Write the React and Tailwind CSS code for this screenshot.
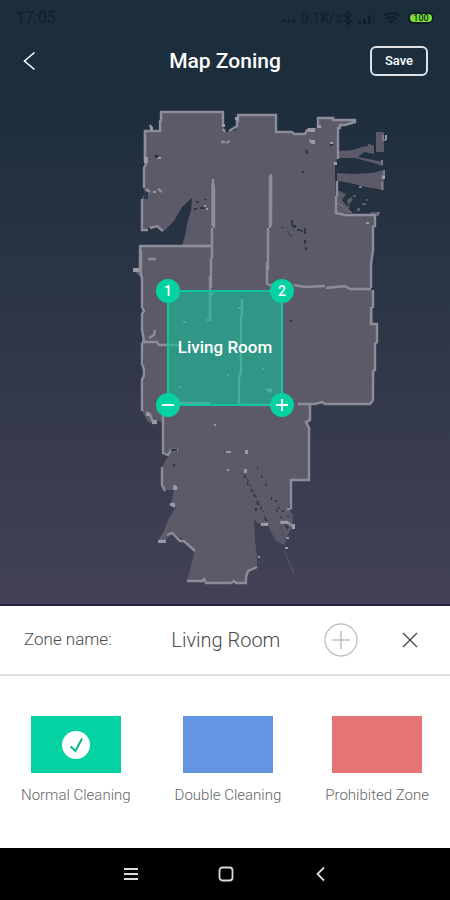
import { useState } from 'react';
import { clsx } from 'clsx';

const ZONE_TYPES = [
  { id: 'normal', label: 'Normal Cleaning', color: 'bg-[#04d2a2]' },
  { id: 'double', label: 'Double Cleaning', color: 'bg-[#6495e2]' },
  { id: 'prohibited', label: 'Prohibited Zone', color: 'bg-[#e57474]' },
];

function StatusBar() {
  return (
    <div className="flex h-9 items-center justify-between px-4 text-[#121f2b]">
      <span className="text-base leading-4">17:05</span>
      <div className="flex items-center gap-1">
        <svg width="16" height="16" viewBox="0 0 16 16" fill="currentColor" aria-hidden="true">
          <circle cx="3" cy="11" r="1.7" />
          <circle cx="8" cy="11" r="1.7" />
          <circle cx="13" cy="11" r="1.7" />
        </svg>
        <span className="-mr-1 text-sm leading-4">0.1K/s</span>
        <svg width="12" height="16" viewBox="0 0 12 16" fill="none" stroke="currentColor" strokeWidth="1.5" aria-hidden="true">
          <path d="M2 4.5l7 7-3.5 3V1.500l3.500 3-7 7" />
        </svg>
        <svg width="18" height="14" viewBox="0 0 18 14" fill="currentColor" aria-hidden="true">
          <path d="M0 10h3v3H0zM5 8h3v5H5zM10 5h2.500v8H10z" />
          <path d="M14.500 2H17v11h-2.500z" opacity="0.35" />
        </svg>
        <svg className="ml-0.5" width="18" height="14" viewBox="0 0 18 14" fill="none" stroke="currentColor" strokeWidth="1.800" aria-hidden="true">
          <path d="M1 5.200C5.500 1 12.500 1 17 5.200M3.700 8c3-2.700 7.600-2.700 10.600 0" />
          <path d="M6 10c1.700-1.500 4.300-1.500 6 0l-3 3z" fill="currentColor" stroke="none" />
        </svg>
        <span className="ml-1 flex h-3 w-[26px] items-center justify-center rounded-full border-2 border-[#121f2b] bg-[#7be02d] text-[9px] leading-none font-medium">
          100
        </span>
      </div>
    </div>
  );
}

function Header() {
  return (
    <header className="grid grid-cols-[1fr_auto_1fr] items-center px-[22px] pt-[10px] text-white">
      <button aria-label="Back" className="justify-self-start">
        <svg width="16" height="20" viewBox="0 0 16 20" fill="none" stroke="currentColor" strokeWidth="1.600" aria-hidden="true">
          <path d="M12.500 1.500L2.500 10l10 8.500" />
        </svg>
      </button>
      <h1 className="text-[21px] leading-7 font-medium">Map Zoning</h1>
      <button className="h-[30px] w-[58px] justify-self-end rounded-md border-2 border-[#dfe2e5] text-[13px] font-medium">
        Save
      </button>
    </header>
  );
}

function FloorMap() {
  return (
    <svg className="block h-full w-full" viewBox="60 100 330 490" fill="none" aria-hidden="true">
      {/* floor */}
      <path
        fill="#5c5a69"
        d="M161 112H223V126L226 132L236 130L237 115H276V132L305 134L311 129L318 127V118L355 120V123L340 126L337 130V160L335 163V180L336 213L374 215L373 250L371 289L373 292V323L377 326L375 368L373 400L370 404H311V420L307 424L309 429V480L291 481V500L288 508L293 515L292 528L288 534L284 545L275 540L268 525L262 526L254 520L255 540L257 558V568L247 571L245 583L207 583L187 581L191 566L195 550L185 540L172 534L164 541H158L164 531L168 520L176 507L171 504L174 490L166 490L162 484V467L165 461L169 455L163 453V422L155 420L153 424L148 422L142 411V379L144 368L142 340L142 285L140 277L134 270L140 267L139 246L182 246L185 236L187 224L191 211L192 198L182 207L174 221L164 231L156 226L142 230V199L145 192L143 187L144 168L146 160L145 130H153L160 130Z"
      />
      {/* scan leftovers outside of the right wall */}
      <g fill="#5c5a69">
        <path d="M376 132H384V152H376ZM337 151L353 150L362 147L374 145L374 154L364 152L358 157L374 160L383 162V166L370 162L355 158L337 158ZM337 173L353 174L372 173L384 170V190L366 187L350 183L337 181ZM337 190L346 194L342 200L352 213H337Z" />
        <path d="M347 200l4-3 2 3-5 5zM345 207l4-2 1 2-4 2zM357 208h3v3h-3zM362 203h4v2h-4zM370 212h8v3h-8zM366 199h2v2h-2zM353 195h3v2h-3zM368 146h3v-2h-3z" />
      </g>
      <path d="M338 203L352 213" stroke="#787686" />
      <g stroke="#7c7b89" strokeWidth="2">
        <path d="M383 135v5h3M384 170v6h-3M382 160v5M377 216l2-4M382 182v8M359 187h3" />
      </g>
      {/* walls */}
      <g stroke="#8d8c99" strokeWidth="2.4" strokeLinejoin="miter">
        <path d="M152 130L150 125M145 162V131H160V121H161V112H223V127M223 129L225 132M229 131L234 128L237 126V121H238V115H276V132H292L294 134H305L307 130L313 129M318 127V118H333V120H355V122L345 125H340V128L338 128V159M335 162V164M337 181V196M336 196V213L345 215H375V226L373 227V250L371 264V288" />
        <path d="M145 131V160L146 164L144 168V188M142 199V230H148M150 228L157 226L163 231M146 189L150 192M158 189L162 192" />
        <path d="M139 246H211M213 179V191M214 188V228M212 228V258M211 258V288M140 246L141 275M134 269L140 270L142 278V307L144 311L142 314V330L144 340L142 344V363L144 370V376L142 379V411M143 342H157L159 345H180M146 412L150 414L152 420L155 424M149 338L154 335L155 330" />
        <path d="M271 174V206M270 193V228M268 228V270M267 262V285M268 285H276M294 285L305 287L325 286M326 288L345 286L350 289H371M373 290V307L371 308V324H377V342L375 344V370L373 371V400L370 404H325L322 402L315 404H298" />
        <path d="M310 404V420L306 422L309 428V480H291V508L287 510M163 413V453L168 455L171 450H178M162 467V485L165 491M174 485L177 489M170 504L175 507M158 541H166M167 535L172 533L180 541H184L195 551M187 581H202L204 579L206 583H231L234 581L236 583H246V577L248 571L257 567M262 524H268M280 522L287 522L294 527" />
        <path d="M148 259h8M221 142h4M226 143l4-2M182 246h8M193 246h20" />
      </g>
      <path d="M213 184V226M270.500 176V226M140.500 250V268" stroke="#8d8c99" strokeWidth="3.500" />
      <g fill="#9a99a6">
        <path d="M226 451h5v2h-5zM245 450h3v4h-3zM227 469h2v2h-2zM244 469h3v4h-3zM157 157h4v2h-4zM153 191h3v2h-3zM204 205h2v2h-2zM206 208h2v2h-2zM309 139l5 2 1 3-6-2zM330 142h3v2h-3zM366 222h3v2h-3zM385 135h2v5h-2zM382 176h3v3h-3zM258 556h2v2h-2zM286 537h3v2h-3zM285 547h3v2h-3zM214 424h2v2h-2z" />
        <path d="M144 157h4v6h-4zM222 124h3v3h-3zM235 117h4v3h-4zM308 128h7v4h-7zM311 140h4v4h-4zM317 125h4v3h-4zM334 162h3v3h-3zM133 268h6v4h-6zM146 413h4v3h-4zM152 420h5v4h-5zM173 486h4v4h-4zM170 503h5v3h-5zM261 523h7v3h-7zM281 521h7v3h-7zM292 524h3v5h-3zM158 540h8v3h-8zM150 125l3 2v3h-3z" />
      </g>
      {/* inner walls that run under the zone */}
      <g stroke="#8d8c99" strokeWidth="2.400">
        <path d="M210 276V320M242 299V315M241 315V372L239 378V404M180 403H210M241 405H283" />
      </g>
      <g fill="#8d8c99">
        <path d="M211 292l4 2-4 2zM206 319h5v2h-5zM183 321h3v2h-3zM227 374h2v2h-2zM179 386h2v2h-2zM265 389l6-1 2 3-3 2zM262 368h2v2h-2zM238 307h5v2h-5z" />
      </g>
      {/* holes and obstacles */}
      <g fill="#2b374a">
        <path d="M154 155h4v3h-3zM144 192h4v7h-4zM196 201h3v2h-3zM204 199h3v1h-3zM194 208h3v2h-3zM200 207h5v2h-5zM305 149l3 2v3h-2zM291 220h2v5h3v3h-3l-2-3zM297 229h4v2h-4zM286 230l2 2 4 5-2-1zM301 230h2v2h-2zM304 228h2v6h-2zM304 240h2v4h-2zM305 247h2v3h-2zM281 227h2v1h-2zM302 171h2v2h-2zM290 320h2v2h-2zM173 464h2v3h-2zM171 449h6v2h-6zM330 144h3v2h-3z" />
        <path d="M244 475h2v3h-2zM247 480l2 5h-2zM250 487l3 5h-2zM254 493l2 5-3-2zM256 500l4 5h-3zM260 507l4 6-4-4zM264 515l4 6h-3zM257 467h1v3h-1zM261 474l2 4h-2zM265 482l2 4h-2zM275 500h2v2h-2zM278 505l2 4h-2zM282 510h2v2h-2zM276 508l2 4h-2zM271 497h1v3h-1zM280 516l3 2h-3zM287 515l3 2h-3zM284 523l5 4-2 3zM255 508h2v3h-2z" />
      </g>
      <path d="M247 479L264 512" stroke="#353b50" strokeDasharray="3 3" />
      <path d="M269 523L281 543L276 541ZM280 525L284 532L287 540L281 542Z" fill="#555667" />
      <path d="M284 550L294 574" stroke="#5c5a69" />
    </svg>
  );
}

function ZoneHandle({ label, className, children }) {
  return (
    <button
      aria-label={label}
      className={clsx(
        'absolute flex size-6 items-center justify-center rounded-full bg-[#04d2a2] text-sm leading-none font-medium text-white',
        className
      )}
    >
      {children}
    </button>
  );
}

function Zone({ name }) {
  return (
    <div className="absolute top-[190px] left-[107px] flex size-[116px] items-center justify-center border-2 border-[#14c49c] bg-[#04d2a2]/50">
      <span className="text-[17px] font-medium whitespace-nowrap text-white">{name}</span>
      <ZoneHandle label="Corner 1" className="-top-[13px] -left-[13px]">1</ZoneHandle>
      <ZoneHandle label="Corner 2" className="-top-[13px] -right-[13px]">2</ZoneHandle>
      <ZoneHandle label="Remove zone" className="-bottom-[13px] -left-[13px]">
        <svg width="12" height="12" viewBox="0 0 12 12" stroke="currentColor" strokeWidth="2">
          <path d="M0 6h12" />
        </svg>
      </ZoneHandle>
      <ZoneHandle label="Add zone" className="-right-[13px] -bottom-[13px]">
        <svg width="12" height="12" viewBox="0 0 12 12" stroke="currentColor" strokeWidth="2">
          <path d="M0 6h12M6 0v12" />
        </svg>
      </ZoneHandle>
    </div>
  );
}

function ZoneNameRow({ name, onChange }) {
  return (
    <div className="flex h-[70px] items-center border-b-2 border-[#e0e0e0] pr-8 pl-6 text-[#4a4a4a]">
      <label htmlFor="zone-name" className="shrink-0 text-[17px] font-light">
        Zone name:
      </label>
      <input
        id="zone-name"
        type="text"
        value={name}
        onChange={(e) => onChange(e.target.value)}
        className="mx-4 min-w-0 flex-1 bg-transparent pl-4 text-center text-xl font-light outline-none"
      />
      <button aria-label="Add name" className="shrink-0">
        <svg width="34" height="34" viewBox="0 0 34 34" fill="none" stroke="#bfc1c6" strokeWidth="1.300" aria-hidden="true">
          <circle cx="17" cy="17" r="16" />
          <path d="M8 17h18M17 8v18" strokeWidth="1.600" />
        </svg>
      </button>
      <button aria-label="Clear name" onClick={() => onChange('')} className="ml-11 shrink-0">
        <svg width="16" height="16" viewBox="0 0 16 16" fill="none" stroke="currentColor" strokeWidth="1.400" aria-hidden="true">
          <path d="M1 1l14 14M15 1L1 15" />
        </svg>
      </button>
    </div>
  );
}

function ZoneTypePicker({ value, onChange }) {
  return (
    <div className="flex justify-between px-[21px] pt-10 pb-[43px]">
      {ZONE_TYPES.map((type) => (
        <label key={type.id} className="flex cursor-pointer flex-col items-center gap-3">
          <input
            type="radio"
            name="zone-type"
            className="sr-only"
            checked={value === type.id}
            onChange={() => onChange(type.id)}
          />
          <span className={clsx('flex h-[57px] w-[90px] items-center justify-center', type.color)}>
            {value === type.id && (
              <svg width="28" height="28" viewBox="0 0 28 28" fill="none" aria-hidden="true">
                <circle cx="14" cy="14" r="14" fill="#fff" />
                <path d="M8.500 15.500l5 4.500L20 7.500" stroke="#04b88e" strokeWidth="2" />
              </svg>
            )}
          </span>
          <span className="text-[15px] leading-5 font-light whitespace-nowrap text-[#666]">{type.label}</span>
        </label>
      ))}
    </div>
  );
}

function NavBar() {
  return (
    <nav className="flex h-[52px] items-center justify-center gap-20 bg-black text-[#dcdcdc]">
      <button aria-label="Recent apps">
        <svg width="16" height="14" viewBox="0 0 16 14" stroke="currentColor" strokeWidth="2" aria-hidden="true">
          <path d="M2 2h14M2 7h14M2 12h14" />
        </svg>
      </button>
      <button aria-label="Home">
        <svg width="16" height="16" viewBox="0 0 16 16" fill="none" stroke="currentColor" strokeWidth="1.800" aria-hidden="true">
          <rect x="1.500" y="1.500" width="13" height="13" rx="3" />
        </svg>
      </button>
      <button aria-label="Back">
        <svg width="14" height="16" viewBox="0 0 14 16" fill="none" stroke="currentColor" strokeWidth="1.800" aria-hidden="true">
          <path d="M10 1.500L3.500 8l6.500 6.500" />
        </svg>
      </button>
    </nav>
  );
}

export default function App() {
  const [name, setName] = useState('Living Room');
  const [zoneType, setZoneType] = useState('normal');

  return (
    <div className="flex min-h-screen flex-col bg-white font-[Roboto,sans-serif]">
      <div className="flex flex-1 flex-col bg-linear-to-b from-[#1c2d3c] from-15% to-[#434155]">
        <StatusBar />
        <Header />
        <main className="flex flex-1 justify-center pt-6 pb-3">
          <div className="relative h-[490px] w-[330px]">
            <FloorMap />
            <Zone name={name} />
          </div>
        </main>
      </div>
      <section className="border-t-2 border-[#24233f]">
        <ZoneNameRow name={name} onChange={setName} />
        <ZoneTypePicker value={zoneType} onChange={setZoneType} />
      </section>
      <NavBar />
    </div>
  );
}
